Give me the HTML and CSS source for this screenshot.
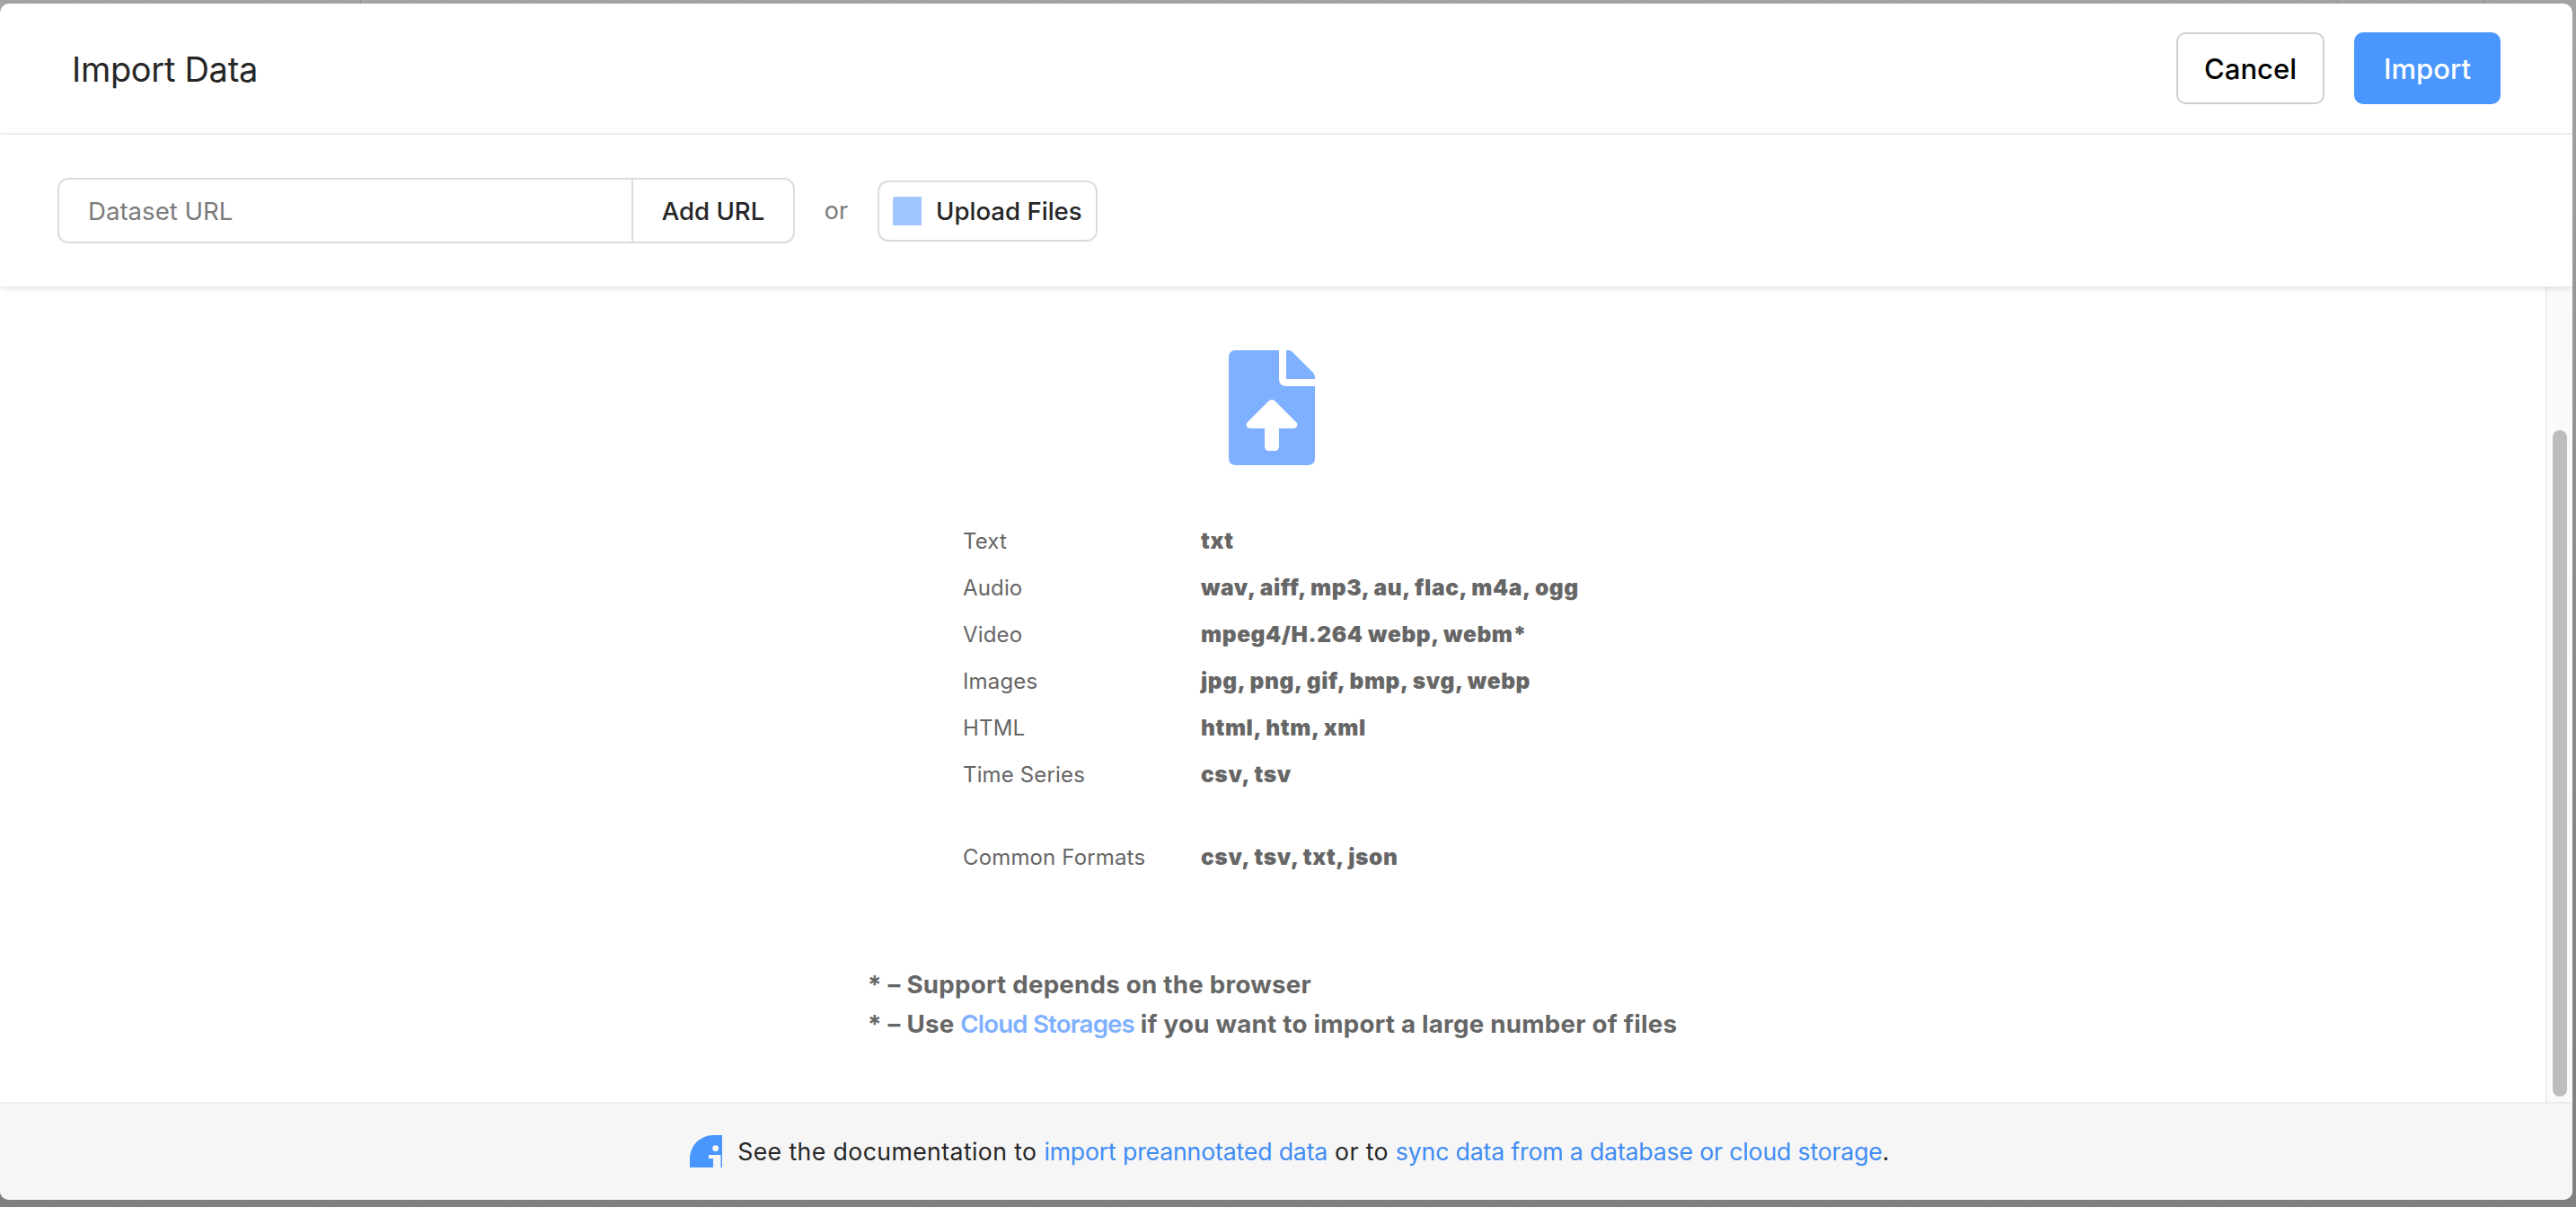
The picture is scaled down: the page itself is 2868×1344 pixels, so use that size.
FILE: index.html
```html
<!DOCTYPE html>
<html lang="en">
<head>
<meta charset="utf-8">
<title>Import Data</title>
<link rel="stylesheet" href="styles.css">
</head>
<body>
<div class="backdrop-line"></div>
<div class="backdrop-pill"></div>
<div class="modal">
  <header class="header">
    <h1 class="title">Import Data</h1>
    <div class="actions">
      <button class="btn btn-cancel">Cancel</button>
      <button class="btn btn-import">Import</button>
    </div>
  </header>
  <section class="toolbar">
    <div class="url-group">
      <div class="url-input">Dataset URL</div>
      <button class="url-add">Add URL</button>
    </div>
    <span class="or">or</span>
    <button class="upload"><span class="upload-icon"></span>Upload Files</button>
  </section>
  <section class="body">
    <main class="drop">
      <svg class="file-icon" width="96" height="128" viewBox="0 0 96 128">
        <path fill="#7fb0ff" d="M8 0H56V32Q56 40 64 40H96V120Q96 128 88 128H8Q0 128 0 120V8Q0 0 8 0Z"/>
        <path fill="#7fb0ff" d="M64 0H66Q69 0 71 2L94 25Q96 27 96 30V32H64Z"/>
        <path fill="#fff" d="M48 55Q50 55 52 57L75 80Q78 83 75 86Q74 87 72 87H56V107Q56 112 51 112H45Q40 112 40 107V87H24Q22 87 21 86Q18 83 21 80L44 57Q46 55 48 55Z"/>
      </svg>
      <div class="formats">
        <div class="row"><span class="label">Text</span><span class="value">txt</span></div>
        <div class="row"><span class="label">Audio</span><span class="value">wav, aiff, mp3, au, flac, m4a, ogg</span></div>
        <div class="row"><span class="label">Video</span><span class="value">mpeg4/H.264 webp, webm*</span></div>
        <div class="row"><span class="label">Images</span><span class="value">jpg, png, gif, bmp, svg, webp</span></div>
        <div class="row"><span class="label">HTML</span><span class="value">html, htm, xml</span></div>
        <div class="row"><span class="label">Time Series</span><span class="value">csv, tsv</span></div>
        <div class="row row-gap"><span class="label">Common Formats</span><span class="value">csv, tsv, txt, json</span></div>
      </div>
      <div class="notes">
        <p>* – Support depends on the browser</p>
        <p>* – Use <a class="cloud" href="#">Cloud Storages</a> if you want to import a large number of files</p>
      </div>
    </main>
    <aside class="scrollbar"><div class="thumb"></div></aside>
  </section>
  <footer class="footer">
    <svg class="info" width="36" height="36" viewBox="0 0 36 36">
      <path fill="#4a96ff" d="M36 0V36H0V26A26 26 0 0 1 26 0Z"/>
      <circle cx="28.7" cy="14.7" r="3.4" fill="#f6f6f6"/>
      <path fill="#f6f6f6" d="M21 22H34.5V36H26V26H21Z"/>
    </svg>
    <span>See the documentation to <a href="#">import preannotated data</a> or to <a href="#">sync data from a database or cloud storage</a>.</span>
  </footer>
</div>
</body>
</html>
```

FILE: styles.css
```css
* { box-sizing: border-box; }
html, body { margin: 0; height: 100%; }
body {
  background: linear-gradient(#a3a3a3 0, #8c8c8c 50%, #808080 100%);
  padding: 4px 4px 8px 0;
  font-family: Inter, "Noto Sans", sans-serif;
  overflow: hidden;
  position: relative;
}
.backdrop-line {
  position: absolute;
  left: 401px;
  top: 0;
  width: 1px;
  height: 4px;
  background: #8f8f8f;
}
.backdrop-pill {
  position: absolute;
  left: 2600px;
  top: -12px;
  width: 167px;
  height: 18px;
  border: 1px solid #8f8f8f;
  border-radius: 8px;
}
.modal {
  height: 100%;
  background: #fff;
  border-radius: 10px;
  display: flex;
  flex-direction: column;
  overflow: hidden;
  position: relative;
}
.header {
  height: 146px;
  flex: none;
  border-bottom: 2px solid #f1f1f1;
  display: flex;
  align-items: center;
  justify-content: space-between;
  padding: 0 80px 0 80px;
}
.title {
  margin: 2px 0 0;
  font-size: 38px;
  font-weight: 400;
  color: #262626;
  letter-spacing: -0.3px;
}
.actions { display: flex; gap: 33px; }
.btn {
  height: 80px;
  width: 165px;
  border-radius: 10px;
  font: 500 31px Inter, sans-serif;
  padding: 0;
}
.btn-cancel { background: #fff; border: 2px solid #d0d0d0; color: #000; }
.btn-import { background: #4a96ff; border: 0; color: #fff; width: 163px; }
.toolbar {
  height: 169px;
  flex: none;
  display: flex;
  align-items: center;
  padding: 0 0 0 64px;
  position: relative;
  z-index: 1;
  box-shadow: 0 2px 6px rgba(0,0,0,.12);
  background: #fff;
}
.url-group {
  width: 821px;
  height: 73px;
  display: flex;
  border: 2px solid #dcdcdc;
  border-radius: 12px;
}
.url-input {
  width: 639px;
  border-right: 2px solid #dcdcdc;
  padding-left: 32px;
  display: flex;
  align-items: center;
  font-size: 27.6px;
  color: #7b7b7b;
}
.url-add {
  flex: 1;
  background: none;
  border: 0;
  padding: 0;
  font: 500 27.6px Inter, sans-serif;
  color: #262626;
}
.or {
  width: 92px;
  text-align: center;
  font-size: 27px;
  color: #7b7b7b;
}
.upload {
  width: 245px;
  height: 68px;
  border: 2px solid #dcdcdc;
  border-radius: 12px;
  background: #fff;
  display: flex;
  align-items: center;
  padding: 0 0 0 15px;
  gap: 16px;
  font: 500 27.6px Inter, sans-serif;
  color: #262626;
  white-space: nowrap;
}
.upload-icon { width: 32px; height: 32px; background: #a0c6ff; border-radius: 3px 0 0 0; flex: none; }
.body { flex: 1; min-height: 0; display: flex; }
.drop {
  flex: 1;
  border-right: 2px solid #eeeeee;
  display: flex;
  flex-direction: column;
  align-items: center;
  padding-top: 71px;
}
.file-icon { display: block; flex: none; margin-left: -2px; }
.formats { width: 690px; margin-top: 58px; }
.row { height: 52px; display: flex; align-items: center; font-size: 24px; color: #666; }
.row-gap { margin-top: 40px; }
.label { width: 265px; flex: none; white-space: nowrap; letter-spacing: 0.15px; }
.value { font-weight: 900; font-size: 24.5px; letter-spacing: 0.6px; }
.notes { width: 902px; margin-top: 94px; font-size: 27.7px; font-weight: 700; letter-spacing: 0.25px; color: #666; white-space: nowrap; }
.notes p { margin: 0; height: 44px; line-height: 44px; }
.cloud { color: #7fb0ff; text-decoration: none; font-weight: 600; letter-spacing: -0.85px; }
.scrollbar { width: 28px; flex: none; background: #fafafa; position: relative; }
.thumb {
  position: absolute;
  left: 6px;
  top: 160px;
  bottom: 6px;
  width: 16px;
  border-radius: 8px;
  background: #bdbdbd;
}
.footer {
  height: 109px;
  flex: none;
  background: #f6f6f6;
  border-top: 2px solid #ececec;
  display: flex;
  align-items: center;
  justify-content: center;
  gap: 17px;
  padding: 0 0 2px 8px;
  font-size: 26.7px;
  letter-spacing: 0.38px;
  color: #262626;
}
.footer a { color: #3f8cf5; text-decoration: none; letter-spacing: -0.18px; }
```
